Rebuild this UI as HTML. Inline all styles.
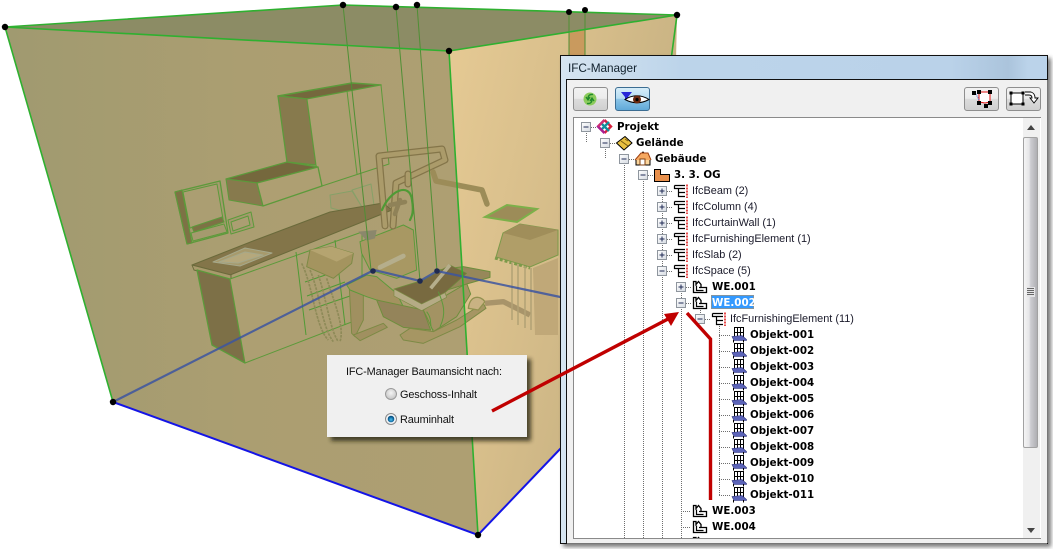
<!DOCTYPE html>
<html><head><meta charset="utf-8"><title>IFC-Manager</title>
<style>html,body{margin:0;padding:0;background:#fff;width:1053px;height:549px;overflow:hidden}svg{display:block}
.t{font-family:"Liberation Sans",sans-serif;font-size:10.9px;fill:#1a1a2a}
.b{font-family:"DejaVu Sans",sans-serif;font-size:10.3px;font-weight:bold;fill:#000}
.d{font-family:"Liberation Sans",sans-serif;font-size:10.9px;fill:#111}
</style></head><body>
<svg width="1053" height="549" viewBox="0 0 1053 549" xmlns="http://www.w3.org/2000/svg">
<defs>
<linearGradient id="lw" x1="0" x2="1" y1="0" y2="0"><stop offset="0" stop-color="#a09a70"/><stop offset=".5" stop-color="#ab9e71"/><stop offset="1" stop-color="#ae9f72"/></linearGradient>
<linearGradient id="rw" x1="0" x2="1" y1="0" y2=".55"><stop offset="0" stop-color="#e6ca94"/><stop offset=".5" stop-color="#d6bd8a"/><stop offset="1" stop-color="#c2ae80"/></linearGradient>
<linearGradient id="ti" x1="0" x2="1" y1="0" y2="0"><stop offset="0" stop-color="#d6e4f0"/><stop offset=".25" stop-color="#bcd4ea"/><stop offset=".8" stop-color="#bad2e9"/><stop offset=".92" stop-color="#abc4dc"/><stop offset=".96" stop-color="#bbd3ea"/></linearGradient>
<linearGradient id="btn" x1="0" x2="0" y1="0" y2="1"><stop offset="0" stop-color="#f2f2f2"/><stop offset=".48" stop-color="#ececec"/><stop offset=".5" stop-color="#dcdcdc"/><stop offset="1" stop-color="#cfcfcf"/></linearGradient>
<linearGradient id="btnb" x1="0" x2="0" y1="0" y2="1"><stop offset="0" stop-color="#d8eef9"/><stop offset=".48" stop-color="#b5dcf2"/><stop offset=".5" stop-color="#8cc5e8"/><stop offset="1" stop-color="#5fa8d8"/></linearGradient>
<linearGradient id="th" x1="0" x2="1" y1="0" y2="0"><stop offset="0" stop-color="#f6f6f6"/><stop offset=".4" stop-color="#e6e6e8"/><stop offset=".5" stop-color="#cdcdd2"/><stop offset="1" stop-color="#acacb0"/></linearGradient>
<linearGradient id="exp" x1="0" x2="1" y1="0" y2="1"><stop offset="0" stop-color="#fff"/><stop offset="1" stop-color="#d6dbe2"/></linearGradient>
<radialGradient id="r1" cx=".5" cy=".4" r=".6"><stop offset="0" stop-color="#f4f4f4"/><stop offset="1" stop-color="#c4c4c4"/></radialGradient>
<radialGradient id="r2" cx=".5" cy=".6" r=".6"><stop offset="0" stop-color="#4cc0ef"/><stop offset=".7" stop-color="#0a5f96"/><stop offset="1" stop-color="#06406c"/></radialGradient>
<filter id="sh" x="-10%" y="-10%" width="120%" height="125%"><feGaussianBlur stdDeviation="2.2"/></filter>
<filter id="soft" x="-5%" y="-5%" width="110%" height="110%"><feGaussianBlur stdDeviation=".35"/></filter>
<clipPath id="tc"><rect x="574" y="119" width="449" height="419"/></clipPath>

<g id="pl"><rect x=".5" y=".5" width="9" height="9" fill="url(#exp)" stroke="#8f969e"/><path d="M2.5 5H7.5M5 2.5V7.5" stroke="#1f2a55" fill="none"/></g>
<g id="mi"><rect x=".5" y=".5" width="9" height="9" fill="url(#exp)" stroke="#8f969e"/><path d="M2.5 5H7.5" stroke="#1f2a55" fill="none"/></g>
<g id="tr"><path d="M.5 1.5H11M.5 1.5V4.500H11M4.500 4.500V12.500H11M4.500 8.500H11" stroke="#000" stroke-width="1.200" fill="none"/><path d="M13 .5V14" stroke="#e01010" stroke-dasharray="2 1" fill="none" stroke-width="1.500"/></g>
<g id="we"><path d="M1.500 1.500H4V4.500L6.500 1.500 9 4.500V7.500H14.500V12.500H1.500Z" fill="#fff" stroke="#000" stroke-width="1.300"/><path d="M4.500 5.500V10.500H11.500M7 7.500H9" stroke="#000" fill="none" stroke-width="1.200"/></g>
<g id="ob"><rect x="3.500" y=".5" width="9" height="10" fill="#fff" stroke="#000"/><path d="M6.500 .5V9M9.500 .5V9M3.500 5.500H12.500" stroke="#000" fill="none"/><path d="M1 9.500 11 8.500 15.500 12.500V13.500L3 13.500Z" fill="#5c64b8" stroke="#2c2f78" stroke-width=".6"/><path d="M2.500 13V15.500M12.500 13V15.500" stroke="#000" fill="none"/></g>
</defs>

<!-- ==== 3D SCENE ==== -->
<polygon points="5,27 449,51 478,535 113,402" fill="url(#lw)"/>
<polygon points="449,51 677,15 670,335 478,535" fill="url(#rw)"/>
<polygon points="5,27 343,5 677,15 449,51" fill="#8c8c65"/>
<polygon points="569,33 585,30 585,60 569,60" fill="#c99a5e"/>

<g filter="url(#soft)">
<g stroke="#5c9a3a" stroke-width="1" stroke-linejoin="round">
<polygon points="278,96 352,83 381,85 307,99" fill="#75673e" stroke-width="1.600"/>
<polygon points="278,96 307,99 316,165 287,162" fill="#877a4e" stroke-width="1.300"/>
<polygon points="307,99 381,85 389,164 322,186 316,165" fill="#ae9f72"/>
<path d="M347,91 357,174" fill="none"/>
<polygon points="226,179 287,162 318,167 257,183" fill="#75673e" stroke-width="1.200"/>
<polygon points="226,179 257,183 263,206 229,200" fill="#877a4e"/>
<polygon points="257,183 318,167 322,186 263,206" fill="#ae9f72" stroke-width="1.300"/>
<polygon points="175,192 220,181 228,233 187,244" fill="#a59a6e" stroke-width="1.300"/>
<polygon points="175,192 182,190 192,243 187,244" fill="#7d7244"/>
<polygon points="183,192 217,184 223,219 190,228" fill="#ab9e72"/>
<polygon points="192,227 222,217 224,222 194,232" fill="#7d7244"/>
<polygon points="191,233 224,224 227,232 193,241" fill="#a59a6e"/>
<polygon points="228,220 251,212 254,227 231,234" fill="#a59a6e"/>
<polygon points="231,222 248,216 250,225 233,231" fill="#ab9e72"/>
<polygon points="330,195 352,191 362,207 350,213 331,208" fill="#a89a6e" stroke="#86a068"/>
<polygon points="352,190 371,184 374,205 362,207" fill="#ab9e72" stroke="#86a068"/>
<polygon points="192,265 253,241 330,212 383,203 392,210 230,275" fill="#83744a" stroke="#6a6a3a"/>
<polygon points="192,265 231,275 231,280 194,270" fill="#a89a6c" stroke="#6a6a3a"/>
<polygon points="197,270 230,279 245,363 212,345" fill="#7d6f47" stroke-width="1.300"/>
<polygon points="230,279 362,232 362,318 245,363" fill="#ad9f72"/>
<polygon points="213,262 245,248 272,253 240,266" fill="#a79a6c" stroke="#a6a88a"/>
<polygon points="219,262 245,252 263,255 238,263" fill="#b5a87c" stroke="#a6a88a"/>
<path d="M296,252L306,335M305,282L340,270M307,296L345,282M309,310L350,296M335,240 345,325" stroke="#4f9a35" fill="none"/>
</g>
<!-- chair area in zoomed coordinates (origin 190,220; scale 1/3) -->
<g transform="translate(190 220) scale(.33333)" stroke-linejoin="round">
<!-- tray -->
<polygon points="360,90 425,80 490,100 485,130 430,175 350,140" fill="#a4945f" stroke="#7d8a45" stroke-width="3"/>
<polygon points="360,90 425,80 490,100 440,125" fill="#b5a470"/>
<g fill="none" stroke="#8e8a58" stroke-width="5" stroke-dasharray="8 3">
<path d="M335,130C370,200 375,320 415,360"/><path d="M360,150C390,220 395,320 430,365"/><path d="M385,165C410,240 420,330 445,365"/><path d="M410,175C430,240 465,320 450,365"/>
</g>
<!-- cuspidor -->
<polygon points="510,65 640,15 670,30 680,150 620,175 540,150 515,100" fill="#a89864" stroke="#5c9a3a" stroke-width="3"/>
<polygon points="505,35 560,30 555,55 530,62" fill="#8b876c"/>
<path d="M585,0V30M612,0V24" stroke="#b8a878" stroke-width="14" fill="none"/>
<path d="M570,142 640,108" stroke="#b5ae8c" stroke-width="14" fill="none" stroke-linecap="round"/>
<!-- post -->
<polygon points="478,205 520,215 520,300 495,350 485,340" fill="#a09060" stroke="#7d8a45" stroke-width="3"/>
<polygon points="490,345 580,310 592,322 510,362" fill="#a09060" stroke="#7d8a45" stroke-width="3"/>
<!-- arm -->
<polygon points="470,195 530,165 560,170 620,220 640,260 590,250 530,230 480,210" fill="#a3925e" stroke="#5c9a3a" stroke-width="3"/>
<!-- lower -->
<polygon points="560,240 700,270 722,330 640,322 580,290" fill="#94845a" stroke="#6e8e3c" stroke-width="3"/>
<polygon points="700,270 770,225 830,190 842,222 800,290 730,335 710,290" fill="#a39363" stroke="#6e8e3c" stroke-width="3"/>
<polygon points="630,345 660,325 730,335 800,300 880,250 888,265 810,320 700,370 640,360" fill="#a69664" stroke="#7d8a45" stroke-width="3"/>
<!-- foot end -->
<polygon points="745,150 820,140 900,155 900,172 830,192 765,212" fill="#97885a" stroke="#6e8e3c" stroke-width="3"/>
<!-- seat -->
<polygon points="612,207 700,180 780,135 830,160 765,218 695,252" fill="#786a40" stroke="#6e8e3c" stroke-width="2"/>
<polygon points="612,207 695,252 765,218 770,232 695,272 612,228" fill="#b5ab85" stroke="#7d8a45" stroke-width="2"/>
<path d="M722,205 780,135" stroke="#b5ae8c" stroke-width="11" fill="none"/>
<path d="M710,275C730,300 715,320 730,330M745,215C760,250 770,280 750,320" stroke="#5c9a3a" stroke-width="3" fill="none"/>
<!-- right side frame -->
<path d="M835,265C840,225 870,225 885,245L865,270Z" fill="#c9b283" stroke="#92914f" stroke-width="4"/>
<path d="M885,250 940,245 1020,285" stroke="#a8946a" stroke-width="16" fill="none"/>
</g>
<!-- pipes -->
<g fill="none" stroke-linecap="round" stroke-linejoin="round">
<path d="M385,226 379,156 442,149 445,160 396,183 393,226" stroke="#84754a" stroke-width="7"/>
<path d="M385,226 379,156 442,149 445,160 396,183 393,226" stroke="#ab9b6b" stroke-width="4.500"/>
<path d="M433,172 436,181 482,190 487,204" stroke="#9c8c58" stroke-width="5.500"/>
<path d="M408,174V184" stroke="#84754a" stroke-width="7"/><path d="M408,174V184" stroke="#ab9b6b" stroke-width="4.500"/>
<path d="M382,210C390,190 410,182 412,200 414,212 412,216 410,220" stroke="#4f9a35" stroke-width="2.200"/>
<path d="M390,205 405,202M395,214 400,200" stroke="#8f8258" stroke-width="4.500"/>
</g>
<!-- plate & lamp -->
<polygon points="485,217 507,205 537,209 517,222" fill="#9c8c58" stroke="#7cb04a" stroke-width="2"/>
<polygon points="503,233 520,224 558,230 558,255 530,267 496,257" fill="#b09e68" stroke="#7c9a4a"/>
<polygon points="503,233 520,224 558,230 530,240" fill="#a08e5a"/>
<path d="M495,258 530,268" stroke="#7c9a4a" stroke-width="3" stroke-dasharray="3 2" fill="none"/>
<path d="M512,262V320M518,264V325M525,266V328M531,268V330" stroke="#b2a274" stroke-width="1.500" fill="none"/>
<polygon points="533,268 558,258 558,335 535,335" fill="#c0a878"/>
</g>

<!-- through lines -->
<g fill="none" stroke="#4f8f35" stroke-width="1">
<path d="M343,5 371,270M396,7 420,281M417,5 437,271M569,12V56M585,10V56"/>
</g>
<path d="M113,402 374,270 420,281 437,271 565,298" fill="none" stroke="#3c55a0" stroke-opacity=".85" stroke-width="2.200"/>
<g fill="#1f2a50"><circle cx="373" cy="271" r="2.800"/><circle cx="420" cy="281" r="2.800"/><circle cx="437" cy="271" r="2.800"/></g>
<g fill="none" stroke="#2fb030" stroke-width="1.600" stroke-linejoin="round">
<path d="M5,27 343,5 677,15 449,51 5,27"/><path d="M5,27 113,402"/><path d="M449,51 478,535"/><path d="M677,15 671,60"/>
</g>
<g fill="none" stroke="#1414e6" stroke-width="2"><path d="M113,402 478,535 562,447"/></g>
<g fill="#000"><circle cx="5" cy="27" r="3.200"/><circle cx="343" cy="5" r="3.200"/><circle cx="396" cy="7" r="3.200"/><circle cx="417" cy="5" r="3.200"/><circle cx="569" cy="12" r="3"/><circle cx="585" cy="10" r="3"/><circle cx="677" cy="15" r="3.200"/><circle cx="449" cy="51" r="3.200"/><circle cx="113" cy="402" r="3.200"/><circle cx="478" cy="535" r="3.200"/></g>

<!-- ==== IFC MANAGER WINDOW ==== -->
<rect x="563" y="58" width="488" height="489" fill="#333" opacity=".65" filter="url(#sh)"/>
<rect x="560.500" y="55.500" width="487" height="488" fill="url(#ti)" stroke="#111"/>
<rect x="566.500" y="79.500" width="481" height="464" fill="#f0f0f0" stroke="#111"/>
<path d="M1047.500 80V543M567 543.500H1047" stroke="#777" fill="none"/>
<text x="568" y="72" font-family="Liberation Sans,sans-serif" font-size="11.800" fill="#10202c" textLength="69">IFC-Manager</text>

<!-- toolbar buttons -->
<rect x="573.500" y="87.500" width="34" height="23" rx="2.500" fill="url(#btn)" stroke="#8e8e8e"/>
<circle cx="590" cy="99" r="6.500" fill="#8ccb5c"/>
<path d="M593,94.500C589,94 588,96 588,99M586,97 588,100 590,97M587,103.500C591,104 592,102 592,99M590,101 592,98 594,101" fill="none" stroke="#1f8a2a" stroke-width="1.300"/>
<rect x="615.500" y="87.500" width="34" height="23" rx="2.500" fill="url(#btnb)" stroke="#3c6d92"/>
<polygon points="621,92 632,92 628,97 628,100 625,99 625,97" fill="#2828d8"/>
<path d="M625,99.500Q637,92 649,99.500 Q637,106 625,99.500Z" fill="#fff" stroke="#000"/>
<circle cx="637" cy="99.500" r="4" fill="#6a2a10"/><circle cx="637" cy="99.500" r="1.600" fill="#000"/>

<rect x="964.500" y="87.500" width="34" height="23" rx="2.500" fill="url(#btn)" stroke="#8e8e8e"/>
<polygon points="979,92 990,92 990,102 985,103 979,102" fill="#fff" stroke="#e01010"/>
<path d="M975,92 979,100" stroke="#3b55c8" stroke-dasharray="1 1"/>
<g fill="#000"><rect x="972" y="91" width="4" height="4"/><rect x="977" y="90" width="4" height="4"/><rect x="988" y="90" width="4" height="4"/><rect x="977" y="101" width="4" height="4"/><rect x="988" y="101" width="4" height="4"/><rect x="984" y="104" width="4" height="4"/></g>

<rect x="1006.500" y="87.500" width="34" height="23" rx="2.500" fill="url(#btn)" stroke="#8e8e8e"/>
<rect x="1011" y="93" width="12" height="11" fill="#fff" stroke="#000"/>
<g fill="#000"><rect x="1009.500" y="91.500" width="3" height="3"/><rect x="1021.500" y="91.500" width="3" height="3"/><rect x="1009.500" y="102.500" width="3" height="3"/><rect x="1021.500" y="102.500" width="3" height="3"/></g>
<path d="M1025,92H1031C1034,93 1035,95 1035,98H1038L1034,103 1030,98H1032C1032,96 1031,95 1029,95H1025" fill="#fff" stroke="#000" stroke-width=".9"/>

<!-- tree box -->
<rect x="573.500" y="117.500" width="467" height="421" fill="#fff" stroke="#8a8a8a"/>
<rect x="1023" y="118" width="17" height="420" fill="#f0f0f0"/>
<path d="M1040.500 118V538" stroke="#fff"/>
<polygon points="1031,125 1035,130 1027,130" fill="#444"/>
<polygon points="1031,533 1035,528 1027,528" fill="#444"/>
<rect x="1023.500" y="137.500" width="14" height="310" rx="1.500" fill="url(#th)" stroke="#a2a2a2"/>
<rect x="1027" y="287" width="8" height="10" fill="#e4e4e6"/>
<path d="M1027 288.500H1034M1027 290.500H1034M1027 292.500H1034M1027 294.500H1034" stroke="#666"/>

<g clip-path="url(#tc)">
<g fill="none" stroke="#6e6e6e" stroke-dasharray="1 1">
<path d="M586.500 131V143M605.500 147V159M624.500 163V538M643.500 179V538M662.500 195V538M681.500 291V538M700.500 308V314M719.500 324V495"/>
<path d="M591 127.500H596M610 143.500H615M629 159.500H634M648 175.500H653"/>
<path d="M667 191.500H673M667 207.500H673M667 223.500H673M667 239.500H673M667 255.500H673M667 271.500H673"/>
<path d="M686 287.500H691M686 303.500H691M705 319.500H711"/>
<path d="M719 335.500H730M719 351.500H730M719 367.500H730M719 383.500H730M719 399.500H730M719 415.500H730M719 431.500H730M719 447.500H730M719 463.500H730M719 479.500H730M719 495.500H730"/>
<path d="M681 511.500H691M681 527.500H691"/>
</g>
<use href="#mi" x="581" y="122"/><use href="#mi" x="600" y="138"/><use href="#mi" x="619" y="154"/><use href="#mi" x="638" y="170"/>
<use href="#pl" x="657" y="186"/><use href="#pl" x="657" y="202"/><use href="#pl" x="657" y="218"/><use href="#pl" x="657" y="234"/><use href="#pl" x="657" y="250"/><use href="#mi" x="657" y="266"/>
<use href="#pl" x="676" y="282"/><use href="#mi" x="676" y="298"/><use href="#mi" x="695" y="314"/>

<!-- Projekt icon -->
<g fill="none" stroke-width="2.400">
<path d="M604.500,120 611,126.500 604.500,133" stroke="#d8203c"/>
<path d="M604.500,120 598,126.500 604.500,133" stroke="#a81fa8"/>
<path d="M600.500,130.500 609,122M600.500,122.500 609,131" stroke="#10909c"/>
<path d="M598,126.500 604.500,133" stroke="#a81f90"/>
<path d="M604.500,120 598,126.500" stroke="#d03070"/>
</g>
<polygon points="616.500,143 625,136.500 632,143 624,150" fill="#e8c040" stroke="#000"/><path d="M621,141 628,146M625,139 628,141" stroke="#7a5c10" fill="none"/>
<path d="M636,159 643,152 650,159V165H636Z" fill="#fbd59c" stroke="#000"/><path d="M635,160 641,153 648,153 651,160" fill="#f6a860" stroke="#a04010"/><rect x="640" y="159" width="5" height="6" fill="#fff" stroke="#804010"/>
<path d="M654.500,169.500H660.500V174.500H669.500V181.500H654.500Z" fill="#e8904c" stroke="#000"/>

<g>
<use href="#tr" x="674" y="184"/><use href="#tr" x="674" y="200"/><use href="#tr" x="674" y="216"/><use href="#tr" x="674" y="232"/><use href="#tr" x="674" y="248"/><use href="#tr" x="674" y="264"/>
<use href="#we" x="692" y="280"/><use href="#we" x="692" y="296"/>
<use href="#tr" x="712" y="312"/>
<use href="#ob" x="731" y="327"/><use href="#ob" x="731" y="343"/><use href="#ob" x="731" y="359"/><use href="#ob" x="731" y="375"/><use href="#ob" x="731" y="391"/><use href="#ob" x="731" y="407"/><use href="#ob" x="731" y="423"/><use href="#ob" x="731" y="439"/><use href="#ob" x="731" y="455"/><use href="#ob" x="731" y="471"/><use href="#ob" x="731" y="487"/>
<use href="#we" x="692" y="504"/><use href="#we" x="692" y="520"/><use href="#we" x="692" y="536"/>
</g>

<rect x="711" y="295" width="43" height="14" fill="#3399ff"/>
<rect x="711.500" y="295.500" width="42" height="13" fill="none" stroke="#d09040" stroke-dasharray="1 1"/>

<text class="b" x="617" y="130">Projekt</text>
<text class="b" x="636" y="146">Gelände</text>
<text class="b" x="655" y="162">Gebäude</text>
<text class="b" x="674" y="178">3. 3. OG</text>
<text class="t" x="692" y="194">IfcBeam (2)</text>
<text class="t" x="692" y="210">IfcColumn (4)</text>
<text class="t" x="692" y="226">IfcCurtainWall (1)</text>
<text class="t" x="692" y="242">IfcFurnishingElement (1)</text>
<text class="t" x="692" y="258">IfcSlab (2)</text>
<text class="t" x="692" y="274">IfcSpace (5)</text>
<text class="b" x="712" y="290">WE.001</text>
<text class="b" x="712" y="306" style="fill:#fff">WE.002</text>
<text class="t" x="730" y="322">IfcFurnishingElement (11)</text>
<text class="b" x="750" y="338">Objekt-001</text>
<text class="b" x="750" y="354">Objekt-002</text>
<text class="b" x="750" y="370">Objekt-003</text>
<text class="b" x="750" y="386">Objekt-004</text>
<text class="b" x="750" y="402">Objekt-005</text>
<text class="b" x="750" y="418">Objekt-006</text>
<text class="b" x="750" y="434">Objekt-007</text>
<text class="b" x="750" y="450">Objekt-008</text>
<text class="b" x="750" y="466">Objekt-009</text>
<text class="b" x="750" y="482">Objekt-010</text>
<text class="b" x="750" y="498">Objekt-011</text>
<text class="b" x="712" y="514">WE.003</text>
<text class="b" x="712" y="530">WE.004</text>
</g>

<!-- ==== CALLOUT ==== -->
<rect x="331" y="359" width="200" height="82" fill="#1e1a0c" opacity=".75" filter="url(#sh)"/>
<rect x="327" y="355" width="200" height="82" fill="#f0f0f0"/>
<text class="d" x="346" y="375" textLength="156">IFC-Manager Baumansicht nach:</text>
<circle cx="391" cy="394" r="5.500" fill="url(#r1)" stroke="#9a9a9a"/>
<text class="d" x="400" y="398" textLength="77">Geschoss-Inhalt</text>
<circle cx="391" cy="419" r="5.500" fill="#eef2f6" stroke="#8a8a8a"/>
<circle cx="391" cy="419" r="3.300" fill="url(#r2)"/>
<text class="d" x="400" y="423" textLength="54">Rauminhalt</text>

<!-- ==== RED ARROWS ==== -->
<g fill="none" stroke="#c00000" stroke-width="3.400">
<path d="M492,411 668,319"/>
<path d="M710.500,500V339L687,313"/>
</g>
<polygon points="679,312 664,314 671,326" fill="#c00000"/>
</svg>
</body></html>
